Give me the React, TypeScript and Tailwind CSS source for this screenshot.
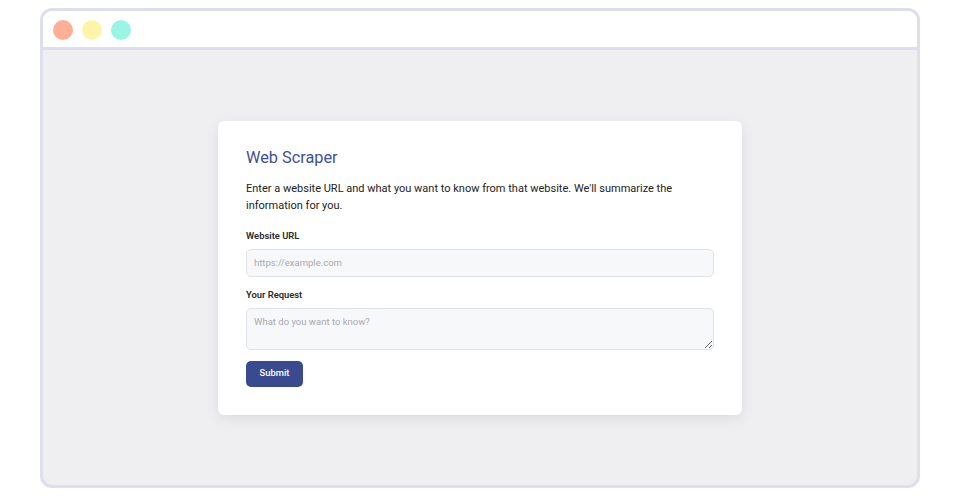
export default function App() {
  return (
    <div className="h-[499px] w-[960px] bg-white px-[40px] pt-[8px] pb-[11px] font-['Roboto',sans-serif]">
      <div className="flex h-full flex-col overflow-hidden rounded-[12px] border-[3px] border-[#dedfee] bg-[#efeff2]">
        <div className="flex h-[39px] items-center gap-[9px] border-b-[3px] border-[#dedfee] bg-white pl-[10px] pt-[2px]">
          <span className="size-[20px] rounded-full bg-[#ffaf96]" />
          <span className="size-[20px] rounded-full bg-[#fff5a8]" />
          <span className="size-[20px] rounded-full bg-[#99f5e4]" />
        </div>
        <div className="flex flex-1 items-center justify-center">
          <div className="w-[524px] rounded-[6px] bg-white p-[28px] shadow-[0_4px_14px_rgba(0,0,0,0.08)]">
            <h1 className="text-[16.3px] leading-[18px] text-[#3e4f9c]">Web Scraper</h1>
            <p className="mt-[13px] text-[11px] leading-[17px] text-[#222]">
              Enter a website URL and what you want to know from that website. We'll summarize the information for you.
            </p>
            <label className="mt-[15px] block text-[9.4px] font-semibold leading-[14px] text-[#2a2a2a]">Website URL</label>
            <input
              placeholder="https://example.com"
              className="mt-[6px] block h-[28px] w-full rounded-[5px] border border-[#e1e2e8] bg-[#f7f8fa] px-[7px] text-[9.5px] text-[#333] placeholder:text-[#a7a9b0] outline-none"
            />
            <label className="mt-[11px] block text-[9.4px] font-semibold leading-[14px] text-[#2a2a2a]">Your Request</label>
            <textarea
              placeholder="What do you want to know?"
              className="mt-[6px] block h-[42px] w-full rounded-[5px] border border-[#e1e2e8] bg-[#f7f8fa] px-[7px] py-[6px] text-[9.5px] text-[#333] placeholder:text-[#a7a9b0] outline-none"
            />
            <button className="mt-[11px] h-[26px] w-[57px] rounded-[5px] bg-[#394a8f] text-[9.4px] font-medium text-white">
              Submit
            </button>
          </div>
        </div>
      </div>
    </div>
  );
}
